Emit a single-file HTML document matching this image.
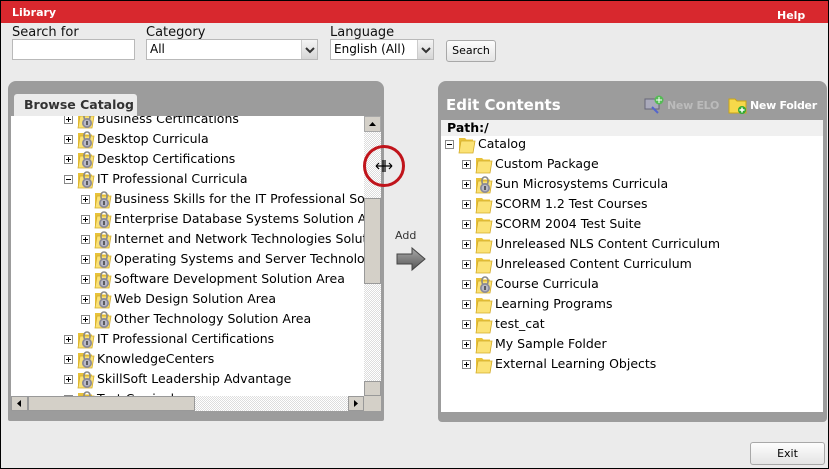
<!DOCTYPE html>
<html><head><meta charset="utf-8"><style>
*{box-sizing:border-box;margin:0;padding:0}
body{width:829px;height:469px;overflow:hidden;background:#000;font-family:"DejaVu Sans","Liberation Sans",sans-serif;font-size:12px;color:#000}
#w{position:absolute;left:1px;top:1px;width:827px;height:467px;background:#ebebeb;overflow:hidden}
.a{position:absolute}
#hdr{left:0;top:0;width:827px;height:22px;background:#d8282e;color:#fff;font-weight:bold;font-size:11px}
.lbl{font-size:13px;color:#111}
.inp{background:#fff;border:1px solid #b9b9b9;height:21px;font-size:12px;padding:2px 3px}
.dd{position:absolute;right:0;top:0;width:16px;height:19px;background:linear-gradient(#f4f4f4,#d6d6d6);border-left:1px solid #ccc}
.btn{border:1px solid #a8a8a8;border-radius:3px;background:linear-gradient(#fdfdfd,#e4e4e4);font-size:11px;text-align:center}
.row{position:absolute;height:20px;line-height:20px;white-space:nowrap;font-size:12.5px}
.row svg{position:absolute}
.row span{position:absolute}
</style></head><body><div id="w">
<div class="a" id="hdr"><span class="a" style="left:11px;top:5px">Library</span><span class="a" style="left:776px;top:8px">Help</span></div>
<div class="a lbl" style="left:11px;top:24px">Search for</div>
<div class="a lbl" style="left:145px;top:24px">Category</div>
<div class="a lbl" style="left:329px;top:24px">Language</div>
<div class="a inp" style="left:11px;top:38px;width:123px"></div>
<div class="a inp" style="left:145px;top:38px;width:172px">All<div class="dd"><svg width="16" height="19"><path d="M4 8l4 4 4-4" stroke="#333" stroke-width="2" fill="none"/></svg></div></div>
<div class="a inp" style="left:329px;top:38px;width:104px">English (All)<div class="dd"><svg width="16" height="19"><path d="M4 8l4 4 4-4" stroke="#333" stroke-width="2" fill="none"/></svg></div></div>
<div class="a btn" style="left:445px;top:39px;width:50px;height:22px;line-height:20px">Search</div>

<div class="a" style="left:7px;top:80px;width:376px;height:340px;background:#9c9c9c;border-radius:8px 8px 2px 2px"></div>
<div class="a" style="left:13px;top:93px;width:123px;height:23px;background:#ebebeb;border-radius:3px 3px 0 0;font-weight:bold;font-size:12.5px;padding:3px 0 0 10px;color:#333">Browse Catalog</div>
<div class="a" style="left:10px;top:115px;width:353px;height:280px;background:#fff;overflow:hidden" id="lt"></div>
<div class="a" style="left:363px;top:115px;width:17px;height:280px;background:repeating-conic-gradient(#ddd 0 25%,#fff 0 50%) 0 0/2px 2px"></div>
<div class="a btn" style="left:363px;top:115px;width:17px;height:16px;border-radius:0;background:#d4d0c8"><svg width="15" height="14"><path d="M4 9h7l-3.5-4z" fill="#000"/></svg></div>
<div class="a" style="left:363px;top:197px;width:17px;height:86px;background:#d4d0c8;border:1px solid #999"></div>
<div class="a" style="left:363px;top:380px;width:17px;height:15px;background:#d4d0c8;border:1px solid #999"></div>
<div class="a" style="left:10px;top:395px;width:353px;height:15px;background:repeating-conic-gradient(#ddd 0 25%,#fff 0 50%) 0 0/2px 2px"></div>
<div class="a" style="left:10px;top:395px;width:17px;height:15px;background:#d4d0c8;border:1px solid #999"><svg width="15" height="13"><path d="M9 3v7l-4-3.5z"/></svg></div>
<div class="a" style="left:27px;top:395px;width:167px;height:15px;background:#d4d0c8;border:1px solid #999"></div>
<div class="a" style="left:347px;top:395px;width:16px;height:15px;background:#d4d0c8;border:1px solid #999"><svg width="14" height="13"><path d="M5 3v7l4-3.5z"/></svg></div>
<div class="a" style="left:363px;top:395px;width:17px;height:15px;background:#d4d0c8"></div>

<div class="a" style="left:362px;top:144px;width:42px;height:42px;border:3px solid #c0141b;border-radius:50%"></div>
<svg class="a" style="left:374px;top:158px" width="18" height="14"><path d="M1 7h16M1 7l3-3M1 7l3 3M17 7l-3-3M17 7l-3 3M8 1v12M10 1v12" stroke="#000" stroke-width="1.2" fill="none"/></svg>

<div class="a" style="left:394px;top:228px;font-size:11px;color:#333">Add</div>
<svg class="a" style="left:395px;top:245px" width="30" height="26"><defs><linearGradient id="ag" x1="0" y1="0" x2="0" y2="1"><stop offset="0" stop-color="#aaa"/><stop offset="1" stop-color="#555"/></linearGradient></defs><path d="M1 8h15V2l13 11-13 11v-6H1z" fill="url(#ag)" stroke="#444"/></svg>

<div class="a" style="left:437px;top:80px;width:389px;height:341px;background:#9c9c9c;border-radius:8px 8px 4px 4px"></div>
<div class="a" style="left:445px;top:95px;color:#fff;font-weight:bold;font-size:15px">Edit Contents</div>
<svg class="a" style="left:643px;top:94px" width="22" height="20"><rect x="1" y="4" width="14" height="10" fill="#aab" stroke="#667"/><circle cx="15" cy="5" r="4.5" fill="#5b5"/><path d="M15 2v6M12 5h6" stroke="#fff"/><path d="M8 12l6 6" stroke="#56c" stroke-width="2"/></svg>
<div class="a" style="left:666px;top:98px;color:#bbb;font-weight:bold;font-size:11px;letter-spacing:-0.3px">New ELO</div>
<svg class="a" style="left:727px;top:94px" width="20" height="20"><path d="M1 4h6l2 2h9v12H1z" fill="#f7d84a" stroke="#c9a418"/><circle cx="14" cy="15" r="4" fill="#3a3"/><path d="M14 12.5v5M11.5 15h5" stroke="#fff" stroke-width="1.5"/></svg>
<div class="a" style="left:749px;top:98px;color:#fff;font-weight:bold;font-size:11px;letter-spacing:-0.3px">New Folder</div>
<div class="a" style="left:440px;top:119px;width:382px;height:292px;background:#fff"></div>
<div class="a" style="left:440px;top:119px;width:382px;height:16px;background:#f0f0f0;font-weight:bold;font-size:12.5px;padding-left:6px;line-height:16px">Path:/</div>
<div class="a" style="left:0;top:0" id="rt"></div>

<div class="a btn" style="left:749px;top:441px;width:75px;height:23px;line-height:21px">Exit</div>
</div>
<script>
function folder(x,y,lock){return '<svg style="left:'+x+'px;top:'+y+'px" width="20" height="19"><path d="M1 3h6l1.5 1.5H15V17H1z" fill="#e8c23a"/><path d="M3 6h14l-2 12H1z" fill="#fbe276" stroke="#d4ac2a" stroke-width=".8"/>'+(lock?'<rect x="7" y="2" width="6" height="8" rx="3" fill="none" stroke="#888" stroke-width="1.6"/><circle cx="10" cy="13" r="5" fill="#8a8a99"/><circle cx="10" cy="13" r="3.3" fill="#b8b8c6"/><rect x="9.3" y="11" width="1.4" height="4" fill="#333"/>':'')+'</svg>';}
function exp(x,y,m){return '<svg style="left:'+x+'px;top:'+y+'px" width="9" height="9"><rect x=".5" y=".5" width="8" height="8" fill="#fff" stroke="#888"/><path d="M2 4.5h5'+(m?'':'M4.5 2v5')+'" stroke="#000"/></svg>';}
function row(x,y,lvl,t,lock,m){var ex=x+lvl*17;return '<div class="row" style="left:0;top:'+y+'px;width:820px">'+exp(ex,6,m)+folder(ex+13,1,lock)+'<span style="left:'+(ex+33)+'px">'+t+'</span></div>';}
var L=[[0,'Business Certifications'],[0,'Desktop Curricula'],[0,'Desktop Certifications'],[0,'IT Professional Curricula',1],[1,'Business Skills for the IT Professional Solution Area'],[1,'Enterprise Database Systems Solution Area'],[1,'Internet and Network Technologies Solution Area'],[1,'Operating Systems and Server Technologies'],[1,'Software Development Solution Area'],[1,'Web Design Solution Area'],[1,'Other Technology Solution Area'],[0,'IT Professional Certifications'],[0,'KnowledgeCenters'],[0,'SkillSoft Leadership Advantage'],[0,'Test Curricula']];
var h='';L.forEach(function(r,i){h+=row(53,-7+i*20,r[0],r[1],1,r[2]);});
document.getElementById('lt').innerHTML=h;
var R=[['Custom Package',0],['Sun Microsystems Curricula',1],['SCORM 1.2 Test Courses',0],['SCORM 2004 Test Suite',0],['Unreleased NLS Content Curriculum',0],['Unreleased Content Curriculum',0],['Course Curricula',1],['Learning Programs',0],['test_cat',0],['My Sample Folder',0],['External Learning Objects',0]];
h=row(444,133,0,'Catalog',0,1);
R.forEach(function(r,i){h+=row(444,153+i*20,1,r[0],r[1]);});
document.getElementById('rt').innerHTML=h;
</script>
</body></html>
